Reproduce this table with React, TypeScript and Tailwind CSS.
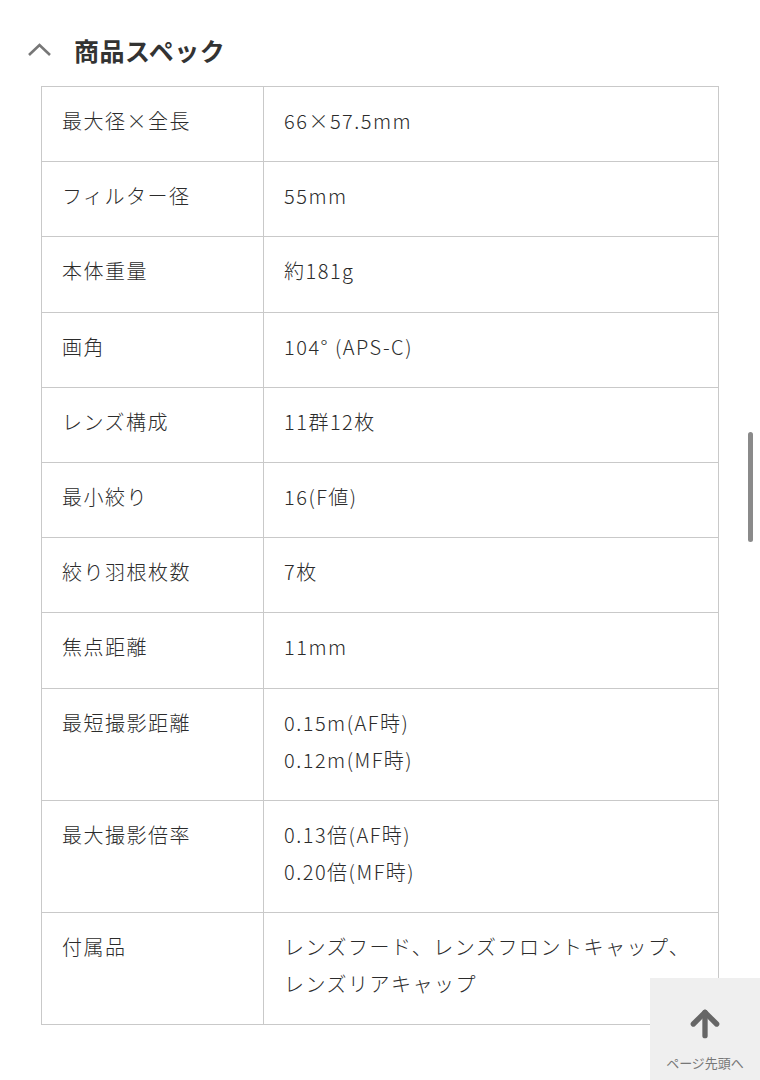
import { ArrowUp } from "lucide-react";

type Spec = {
  label: string;
  values: string[];
};

const specs: Spec[] = [
  { label: "最大径×全長", values: ["66×57.5mm"] },
  { label: "フィルター径", values: ["55mm"] },
  { label: "本体重量", values: ["約181g"] },
  { label: "画角", values: ["104° (APS-C)"] },
  { label: "レンズ構成", values: ["11群12枚"] },
  { label: "最小絞り", values: ["16(F値)"] },
  { label: "絞り羽根枚数", values: ["7枚"] },
  { label: "焦点距離", values: ["11mm"] },
  { label: "最短撮影距離", values: ["0.15m(AF時)", "0.12m(MF時)"] },
  { label: "最大撮影倍率", values: ["0.13倍(AF時)", "0.20倍(MF時)"] },
  { label: "付属品", values: ["レンズフード、レンズフロントキャップ、", "レンズリアキャップ"] },
];

export default function App() {
  return (
    <div
      className="relative min-h-[1080px] w-[760px] overflow-hidden bg-white text-[#333]"
      style={{ fontFamily: '"Noto Sans CJK JP", "Noto Sans", sans-serif' }}
    >
      <div className="flex items-center gap-[22px] pl-[27px] pt-[32px]">
        <svg width="25" height="16" viewBox="0 0 25 16" className="text-[#777]">
          <path d="M2 13 L12.5 3 L23 13" fill="none" stroke="currentColor" strokeWidth="2.6" />
        </svg>
        <h2 className="text-[25px] font-bold leading-[36px] tracking-[0.5px]">商品スペック</h2>
      </div>

      <table className="ml-[41px] mt-[18px] w-[678px] border-collapse text-[20px] font-light tracking-[1.5px] text-[#2b2b2b]">
        <tbody>
          {specs.map((spec) => (
            <tr key={spec.label}>
              <td className="w-[222px] border border-[#c9c9c9] pb-[22.2px] pl-[20px] pt-[15px] align-top leading-[37px]">
                {spec.label}
              </td>
              <td className="border border-[#c9c9c9] pb-[22.2px] pl-[20px] pt-[15px] align-top leading-[37px]">
                {spec.values.map((v) => (
                  <div key={v}>{v}</div>
                ))}
              </td>
            </tr>
          ))}
        </tbody>
      </table>

      <div className="absolute right-[7px] top-[432px] h-[110px] w-[5px] rounded-full bg-[#8a8a8a]" />

      <button
        type="button"
        className="absolute left-[650px] top-[978px] flex h-[102px] w-[110px] flex-col items-center bg-[#efefef] pt-[26px] text-[#666]"
      >
        <ArrowUp size={40} strokeWidth={3.2} />
        <span className="mt-[10px] text-[13px] leading-[18px] text-[#777]">ページ先頭へ</span>
      </button>
    </div>
  );
}
